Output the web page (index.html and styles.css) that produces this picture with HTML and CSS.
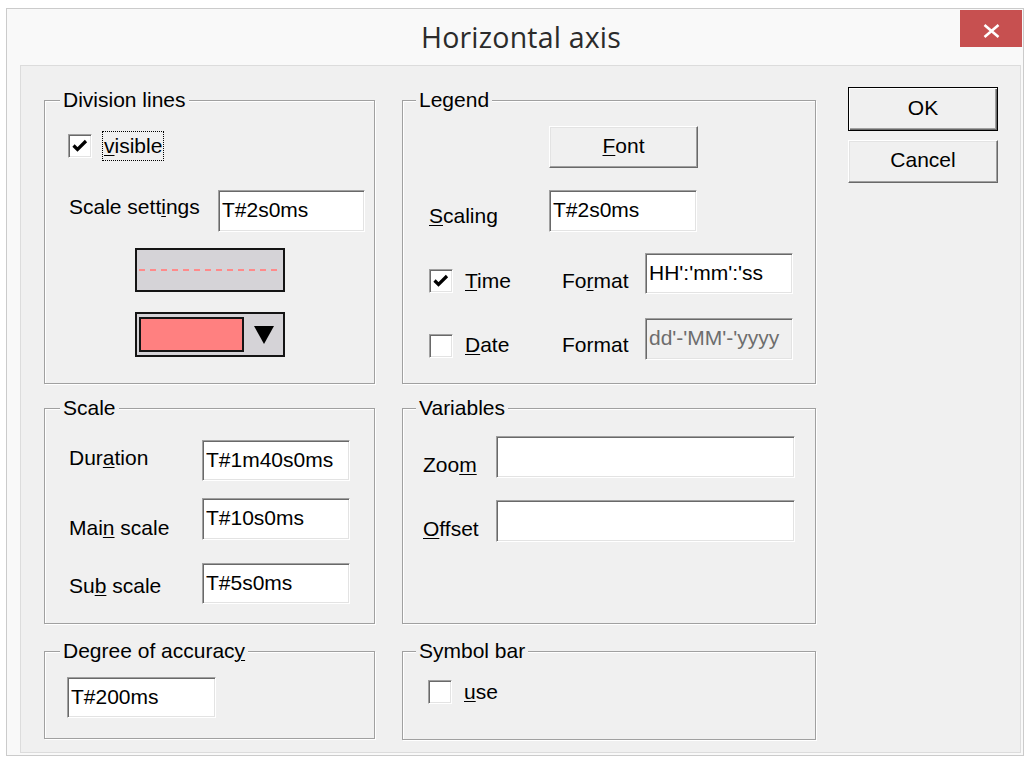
FILE: index.html
```html
<!DOCTYPE html>
<html lang="en">
<head>
<meta charset="utf-8">
<title>Horizontal axis</title>
<link rel="stylesheet" href="styles.css">
</head>
<body>
<div class="window">
  <div class="titlebar">
    <span class="spacer"></span>
    <h1 class="title">Horizontal axis</h1>
    <button class="close" type="button" aria-label="Close">
      <svg width="62" height="37" viewBox="0 0 62 37"><path d="M24.5 15 L38.5 27 M38.5 15 L24.5 27" stroke="#fff" stroke-width="2.6" fill="none"/></svg>
    </button>
  </div>

  <form class="client">
    <fieldset class="group row-top area-division">
      <legend>Division lines</legend>
      <div class="check-row visible-row">
        <span class="checkbox">
          <svg width="20" height="20" viewBox="0 0 20 20"><polyline points="3.5,9.5 7.5,13.5 16,5" fill="none" stroke="#000" stroke-width="3.2"/></svg>
        </span>
        <span class="focus-label"><u>v</u>isible</span>
      </div>
      <div class="field-row settings-row">
        <label class="lbl w-settings" for="scale-settings">Scale sett<u>i</u>ngs</label>
        <input class="edit e147" id="scale-settings" value="T#2s0ms">
      </div>
      <div class="line-style"><span class="dash"></span></div>
      <div class="color-pick">
        <span class="swatch"></span>
        <svg class="arrow" width="20" height="18" viewBox="0 0 20 18"><polygon points="0,0 20,0 10,18" fill="#000"/></svg>
      </div>
    </fieldset>

    <fieldset class="group row-top area-legend">
      <legend>Legend</legend>
      <button class="btn font-btn" type="button"><u>F</u>ont</button>
      <div class="field-row scaling-row">
        <label class="lbl w-scaling" for="scaling"><u>S</u>caling</label>
        <input class="edit e148" id="scaling" value="T#2s0ms">
      </div>
      <div class="field-row time-row">
        <span class="checkbox off16">
          <svg width="20" height="20" viewBox="0 0 20 20"><polyline points="3.5,9.5 7.5,13.5 16,5" fill="none" stroke="#000" stroke-width="3.2"/></svg>
        </span>
        <span class="lbl w-time off16"><u>T</u>ime</span>
        <label class="lbl w-format off16" for="time-format">Fo<u>r</u>mat</label>
        <input class="edit e148 h41" id="time-format" value="HH':'mm':'ss">
      </div>
      <div class="field-row date-row">
        <span class="checkbox off16"></span>
        <span class="lbl w-time off15"><u>D</u>ate</span>
        <label class="lbl w-format off15" for="date-format">Format</label>
        <input class="edit e148" id="date-format" value="dd'-'MM'-'yyyy" disabled>
      </div>
    </fieldset>

    <div class="actions">
      <button class="btn default-btn" type="button">OK</button>
      <button class="btn cancel-btn" type="button">Cancel</button>
    </div>

    <fieldset class="group row-mid area-scale">
      <legend>Scale</legend>
      <div class="field-row duration-row">
        <label class="lbl w-scale" for="duration">Dur<u>a</u>tion</label>
        <input class="edit e148 h41" id="duration" value="T#1m40s0ms">
      </div>
      <div class="field-row main-row">
        <label class="lbl w-scale off18" for="main-scale">Mai<u>n</u> scale</label>
        <input class="edit e148" id="main-scale" value="T#10s0ms">
      </div>
      <div class="field-row sub-row">
        <label class="lbl w-scale off11" for="sub-scale">Su<u>b</u> scale</label>
        <input class="edit e148 h41" id="sub-scale" value="T#5s0ms">
      </div>
    </fieldset>

    <fieldset class="group row-mid area-variables">
      <legend>Variables</legend>
      <div class="field-row zoom-row">
        <label class="lbl w-var off17" for="zoom">Zoo<u>m</u></label>
        <input class="edit e299" id="zoom" value="">
      </div>
      <div class="field-row offset-row">
        <label class="lbl w-var off17" for="offset"><u>O</u>ffset</label>
        <input class="edit e299" id="offset" value="">
      </div>
    </fieldset>

    <fieldset class="group row-low area-accuracy">
      <legend>Degree of accurac<u>y</u></legend>
      <input class="edit e149 h41 accuracy-input" value="T#200ms" aria-label="Degree of accuracy">
    </fieldset>

    <fieldset class="group row-low area-symbol">
      <legend>Symbol bar</legend>
      <div class="check-row use-row">
        <span class="checkbox"></span>
        <span class="lbl"><u>u</u>se</span>
      </div>
    </fieldset>
  </form>
</div>
</body>
</html>
```

FILE: styles.css
```css
* {
  box-sizing: border-box;
}

html,
body {
  margin: 0;
  background: #ffffff;
}

body {
  font-family: "Liberation Sans", Arial, sans-serif;
  font-size: 21px;
  color: #000000;
}

u {
  text-decoration-thickness: 1px;
  text-underline-offset: 2px;
}

/* ---------- window frame ---------- */

.window {
  margin: 8px 0 0 6px;
  width: 1018px;
  border: 1px solid #cbcbcb;
  background: #f9f9f9;
  padding: 0 1px 2px 13px;
}

.titlebar {
  height: 56px;
  display: grid;
  grid-template-columns: 1fr auto 1fr;
}

.title {
  margin: 0;
  font-family: "Open Sans", "Noto Sans", sans-serif;
  font-weight: 400;
  font-size: 28.5px;
  letter-spacing: 0.2px;
  line-height: 56px;
  color: #2b2b2b;
  white-space: nowrap;
}

.close {
  justify-self: end;
  align-self: start;
  margin-top: 1px;
  width: 62px;
  height: 37px;
  padding: 0;
  border: 0;
  background: #c75050;
  display: block;
}

.close svg {
  display: block;
}

/* ---------- client area ---------- */

.client {
  margin: 0 1px 0 0;
  height: 688px;
  border: 1px solid #dcdcdc;
  background: #f0f0f0;
  padding: 23px 0 0 23px;
  display: grid;
  grid-template-columns: 331px 414px 150px;
  grid-template-rows: 295px 227px 99px;
  column-gap: 27px;
  row-gap: 13px;
  align-items: start;
  grid-template-areas:
    "division legend actions"
    "scale variables actions"
    "accuracy symbol actions";
}

.area-division { grid-area: division; }
.area-legend { grid-area: legend; }
.area-scale { grid-area: scale; }
.area-variables { grid-area: variables; }
.area-accuracy { grid-area: accuracy; }
.area-symbol { grid-area: symbol; }

/* etched group box */
.group {
  margin: 0;
  padding: 0;
  min-width: 0;
  border: 1px solid #a0a0a0;
  box-shadow: inset 1px 1px 0 #ffffff, 1px 1px 0 #ffffff;
}

.group legend {
  margin-left: 15px;
  padding: 0 3px;
  line-height: 22px;
  background: #f0f0f0;
  white-space: nowrap;
}

.area-legend legend,
.area-variables legend,
.area-symbol legend {
  margin-left: 13px;
}

.row-top { height: 295px; }
.row-mid { height: 227px; }
.row-low { height: 99px; margin-top: 3px; }
.area-symbol { height: 100px; }

/* ---------- generic controls ---------- */

.field-row {
  display: flex;
  align-items: flex-start;
}

.check-row {
  display: flex;
  align-items: center;
}

.lbl {
  display: block;
  line-height: 24px;
  white-space: nowrap;
  flex: none;
}

.off11 { margin-top: 11px; }
.off15 { margin-top: 15px; }
.off16 { margin-top: 16px; }
.off17 { margin-top: 17px; }
.off18 { margin-top: 18px; }

.edit {
  flex: none;
  display: block;
  height: 42px;
  margin: 0;
  padding: 0 0 2px 3px;
  font: inherit;
  color: #000000;
  background: #ffffff;
  border: 1px solid;
  border-color: #a0a0a0 #ffffff #ffffff #a0a0a0;
  box-shadow: inset 1px 1px 0 #696969, inset -1px -1px 0 #e3e3e3;
  outline: none;
}

.edit:disabled {
  background: #f0f0f0;
  color: #6d6d6d;
  -webkit-text-fill-color: #6d6d6d;
}

.h41 { height: 41px; }
.e147 { width: 147px; }
.e148 { width: 148px; }
.e149 { width: 149px; }
.e299 { width: 299px; }

.checkbox {
  flex: none;
  display: block;
  width: 24px;
  height: 24px;
  background: #ffffff;
  border: 1px solid;
  border-color: #a0a0a0 #ffffff #ffffff #a0a0a0;
  box-shadow: inset 1px 1px 0 #696969, inset -1px -1px 0 #e3e3e3;
  padding: 1px;
}

.checkbox svg {
  display: block;
}

.btn {
  display: block;
  margin: 0;
  padding: 0 0 3px;
  font: inherit;
  color: #000000;
  background: #f0f0f0;
  border: 1px solid;
  border-color: #ffffff #696969 #696969 #ffffff;
  box-shadow: inset -1px -1px 0 #a0a0a0, inset 1px 1px 0 #e3e3e3;
}

/* ---------- Division lines ---------- */

.visible-row {
  margin: 20px 0 0 23px;
  height: 30px;
  gap: 10px;
}

.focus-label {
  display: block;
  height: 30px;
  line-height: 28px;
  padding: 0 1px;
  border: 1px dotted #000000;
}

.settings-row {
  margin: 29px 0 0 24px;
}

.w-settings {
  width: 149px;
  margin-top: 5px;
}

.line-style {
  margin: 16px auto 0;
  width: 150px;
  height: 44px;
  border: 2px solid #141414;
  background: #d5d3d7;
  display: flex;
  align-items: center;
  padding: 0 2px;
}

.dash {
  flex: 1;
  height: 2px;
  background: repeating-linear-gradient(to right, #ff8a8a 0 6px, transparent 6px 11px);
}

.color-pick {
  margin: 20px auto 0;
  width: 150px;
  height: 45px;
  border: 2px solid #141414;
  background: #d5d3d7;
  display: flex;
  align-items: center;
  padding: 0 2px;
}

.swatch {
  width: 105px;
  height: 35px;
  border: 2px solid #141414;
  background: #ff8080;
}

.arrow {
  margin-left: 10px;
  display: block;
}

/* ---------- Legend ---------- */

.font-btn {
  margin: 15px 0 0 146px;
  width: 149px;
  height: 42px;
}

.scaling-row {
  margin: 22px 0 0 26px;
}

.w-scaling {
  width: 120px;
  margin-top: 14px;
}

.time-row {
  margin: 21px 0 0 26px;
}

.date-row {
  margin: 24px 0 0 26px;
}

.w-time {
  width: 97px;
  margin-left: 12px;
}

.w-format {
  width: 83px;
}

/* ---------- OK / Cancel ---------- */

.actions {
  grid-area: actions;
  margin: -2px 0 0 5px;
  display: flex;
  flex-direction: column;
  gap: 9px;
}

.default-btn {
  width: 150px;
  height: 44px;
  border: 1px solid #000000;
  box-shadow: inset 1px 1px 0 #ffffff, inset -1px -1px 0 #696969, inset -2px -2px 0 #a0a0a0;
}

.cancel-btn {
  width: 150px;
  height: 43px;
}

/* ---------- Scale ---------- */

.w-scale {
  width: 133px;
}

.duration-row {
  margin: 21px 0 0 24px;
}

.duration-row .lbl {
  margin-top: 6px;
}

.main-row {
  margin: 17px 0 0 24px;
}

.sub-row {
  margin: 23px 0 0 24px;
}

/* ---------- Variables ---------- */

.w-var {
  width: 73px;
}

.zoom-row {
  margin: 17px 0 0 20px;
}

.offset-row {
  margin: 22px 0 0 20px;
}

/* ---------- Degree of accuracy / Symbol bar ---------- */

.accuracy-input {
  margin: 15px 0 0 22px;
}

.use-row {
  margin: 18px 0 0 25px;
  gap: 12px;
}
```
